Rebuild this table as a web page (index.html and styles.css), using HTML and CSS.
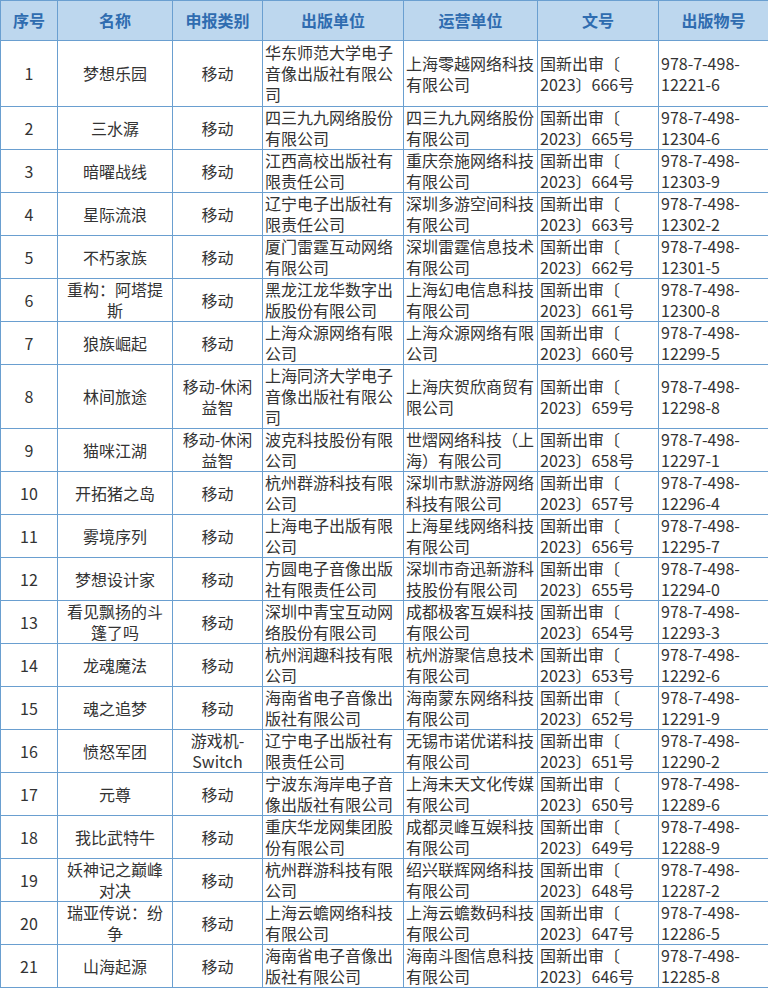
FILE: index.html
```html
<!DOCTYPE html>
<html lang="zh-CN">
<head>
<meta charset="utf-8">
<title>版号</title>
<link rel="stylesheet" href="styles.css">
</head>
<body>
<table class="grid">
<colgroup>
<col class="c-no"><col class="c-name"><col class="c-type"><col class="c-pub"><col class="c-op"><col class="c-doc"><col class="c-isbn">
</colgroup>
<thead>
<tr><th>序号</th><th>名称</th><th>申报类别</th><th>出版单位</th><th>运营单位</th><th>文号</th><th>出版物号</th></tr>
</thead>
<tbody>
<tr class="first"><td class="ctr">1</td><td class="ctr">梦想乐园</td><td class="ctr">移动</td><td>华东师范大学电子<br>音像出版社有限公<br>司</td><td>上海零越网络科技<br>有限公司</td><td>国新出审〔<br>2023〕666号</td><td>978-7-498-<br>12221-6</td></tr>
<tr><td class="ctr">2</td><td class="ctr">三水潺</td><td class="ctr">移动</td><td>四三九九网络股份<br>有限公司</td><td>四三九九网络股份<br>有限公司</td><td>国新出审〔<br>2023〕665号</td><td>978-7-498-<br>12304-6</td></tr>
<tr><td class="ctr">3</td><td class="ctr">暗曜战线</td><td class="ctr">移动</td><td>江西高校出版社有<br>限责任公司</td><td>重庆奈施网络科技<br>有限公司</td><td>国新出审〔<br>2023〕664号</td><td>978-7-498-<br>12303-9</td></tr>
<tr><td class="ctr">4</td><td class="ctr">星际流浪</td><td class="ctr">移动</td><td>辽宁电子出版社有<br>限责任公司</td><td>深圳多游空间科技<br>有限公司</td><td>国新出审〔<br>2023〕663号</td><td>978-7-498-<br>12302-2</td></tr>
<tr><td class="ctr">5</td><td class="ctr">不朽家族</td><td class="ctr">移动</td><td>厦门雷霆互动网络<br>有限公司</td><td>深圳雷霆信息技术<br>有限公司</td><td>国新出审〔<br>2023〕662号</td><td>978-7-498-<br>12301-5</td></tr>
<tr><td class="ctr">6</td><td class="ctr">重构：阿塔提<br>斯</td><td class="ctr">移动</td><td>黑龙江龙华数字出<br>版股份有限公司</td><td>上海幻电信息科技<br>有限公司</td><td>国新出审〔<br>2023〕661号</td><td>978-7-498-<br>12300-8</td></tr>
<tr><td class="ctr">7</td><td class="ctr">狼族崛起</td><td class="ctr">移动</td><td>上海众源网络有限<br>公司</td><td>上海众源网络有限<br>公司</td><td>国新出审〔<br>2023〕660号</td><td>978-7-498-<br>12299-5</td></tr>
<tr><td class="ctr">8</td><td class="ctr">林间旅途</td><td class="ctr">移动-休闲<br>益智</td><td>上海同济大学电子<br>音像出版社有限公<br>司</td><td>上海庆贺欣商贸有<br>限公司</td><td>国新出审〔<br>2023〕659号</td><td>978-7-498-<br>12298-8</td></tr>
<tr><td class="ctr">9</td><td class="ctr">猫咪江湖</td><td class="ctr">移动-休闲<br>益智</td><td>波克科技股份有限<br>公司</td><td>世熠网络科技（上<br>海）有限公司</td><td>国新出审〔<br>2023〕658号</td><td>978-7-498-<br>12297-1</td></tr>
<tr><td class="ctr">10</td><td class="ctr">开拓猪之岛</td><td class="ctr">移动</td><td>杭州群游科技有限<br>公司</td><td>深圳市默游游网络<br>科技有限公司</td><td>国新出审〔<br>2023〕657号</td><td>978-7-498-<br>12296-4</td></tr>
<tr><td class="ctr">11</td><td class="ctr">雾境序列</td><td class="ctr">移动</td><td>上海电子出版有限<br>公司</td><td>上海星线网络科技<br>有限公司</td><td>国新出审〔<br>2023〕656号</td><td>978-7-498-<br>12295-7</td></tr>
<tr><td class="ctr">12</td><td class="ctr">梦想设计家</td><td class="ctr">移动</td><td>方圆电子音像出版<br>社有限责任公司</td><td>深圳市奇迅新游科<br>技股份有限公司</td><td>国新出审〔<br>2023〕655号</td><td>978-7-498-<br>12294-0</td></tr>
<tr><td class="ctr">13</td><td class="ctr">看见飘扬的斗<br>篷了吗</td><td class="ctr">移动</td><td>深圳中青宝互动网<br>络股份有限公司</td><td>成都极客互娱科技<br>有限公司</td><td>国新出审〔<br>2023〕654号</td><td>978-7-498-<br>12293-3</td></tr>
<tr><td class="ctr">14</td><td class="ctr">龙魂魔法</td><td class="ctr">移动</td><td>杭州润趣科技有限<br>公司</td><td>杭州游聚信息技术<br>有限公司</td><td>国新出审〔<br>2023〕653号</td><td>978-7-498-<br>12292-6</td></tr>
<tr><td class="ctr">15</td><td class="ctr">魂之追梦</td><td class="ctr">移动</td><td>海南省电子音像出<br>版社有限公司</td><td>海南蒙东网络科技<br>有限公司</td><td>国新出审〔<br>2023〕652号</td><td>978-7-498-<br>12291-9</td></tr>
<tr><td class="ctr">16</td><td class="ctr">愤怒军团</td><td class="ctr">游戏机-<br>Switch</td><td>辽宁电子出版社有<br>限责任公司</td><td>无锡市诺优诺科技<br>有限公司</td><td>国新出审〔<br>2023〕651号</td><td>978-7-498-<br>12290-2</td></tr>
<tr><td class="ctr">17</td><td class="ctr">元尊</td><td class="ctr">移动</td><td>宁波东海岸电子音<br>像出版社有限公司</td><td>上海未天文化传媒<br>有限公司</td><td>国新出审〔<br>2023〕650号</td><td>978-7-498-<br>12289-6</td></tr>
<tr><td class="ctr">18</td><td class="ctr">我比武特牛</td><td class="ctr">移动</td><td>重庆华龙网集团股<br>份有限公司</td><td>成都灵峰互娱科技<br>有限公司</td><td>国新出审〔<br>2023〕649号</td><td>978-7-498-<br>12288-9</td></tr>
<tr><td class="ctr">19</td><td class="ctr">妖神记之巅峰<br>对决</td><td class="ctr">移动</td><td>杭州群游科技有限<br>公司</td><td>绍兴联辉网络科技<br>有限公司</td><td>国新出审〔<br>2023〕648号</td><td>978-7-498-<br>12287-2</td></tr>
<tr><td class="ctr">20</td><td class="ctr">瑞亚传说：纷<br>争</td><td class="ctr">移动</td><td>上海云蟾网络科技<br>有限公司</td><td>上海云蟾数码科技<br>有限公司</td><td>国新出审〔<br>2023〕647号</td><td>978-7-498-<br>12286-5</td></tr>
<tr><td class="ctr">21</td><td class="ctr">山海起源</td><td class="ctr">移动</td><td>海南省电子音像出<br>版社有限公司</td><td>海南斗图信息科技<br>有限公司</td><td>国新出审〔<br>2023〕646号</td><td>978-7-498-<br>12285-8</td></tr>
</tbody>
</table>
</body>
</html>
```

FILE: styles.css
```css
html, body {
  margin: 0;
  padding: 0;
  background: #ffffff;
}

body {
  font-family: "Noto Sans CJK SC", "Microsoft YaHei", sans-serif;
  font-size: 16px;
  color: #333333;
}

.grid {
  border-collapse: collapse;
  table-layout: fixed;
  width: 768px;
}

.c-no { width: 57px; }
.c-name { width: 115px; }
.c-type { width: 90px; }
.c-pub { width: 141px; }
.c-op { width: 134px; }
.c-doc { width: 121px; }
.c-isbn { width: 110px; }

.grid th,
.grid td {
  border: 1px solid #6a9fd0;
  line-height: 21px;
  vertical-align: middle;
  white-space: nowrap;
  overflow: hidden;
}

.grid th {
  height: 39px;
  padding: 0;
  background: #bdd7ee;
  color: #2f6cb0;
  font-weight: bold;
  text-align: center;
}

.grid td {
  padding: 0 2px;
  text-align: left;
}

.grid tr.first td {
  padding-top: 1px;
  padding-bottom: 1px;
}

.grid td.ctr {
  text-align: center;
}
```
